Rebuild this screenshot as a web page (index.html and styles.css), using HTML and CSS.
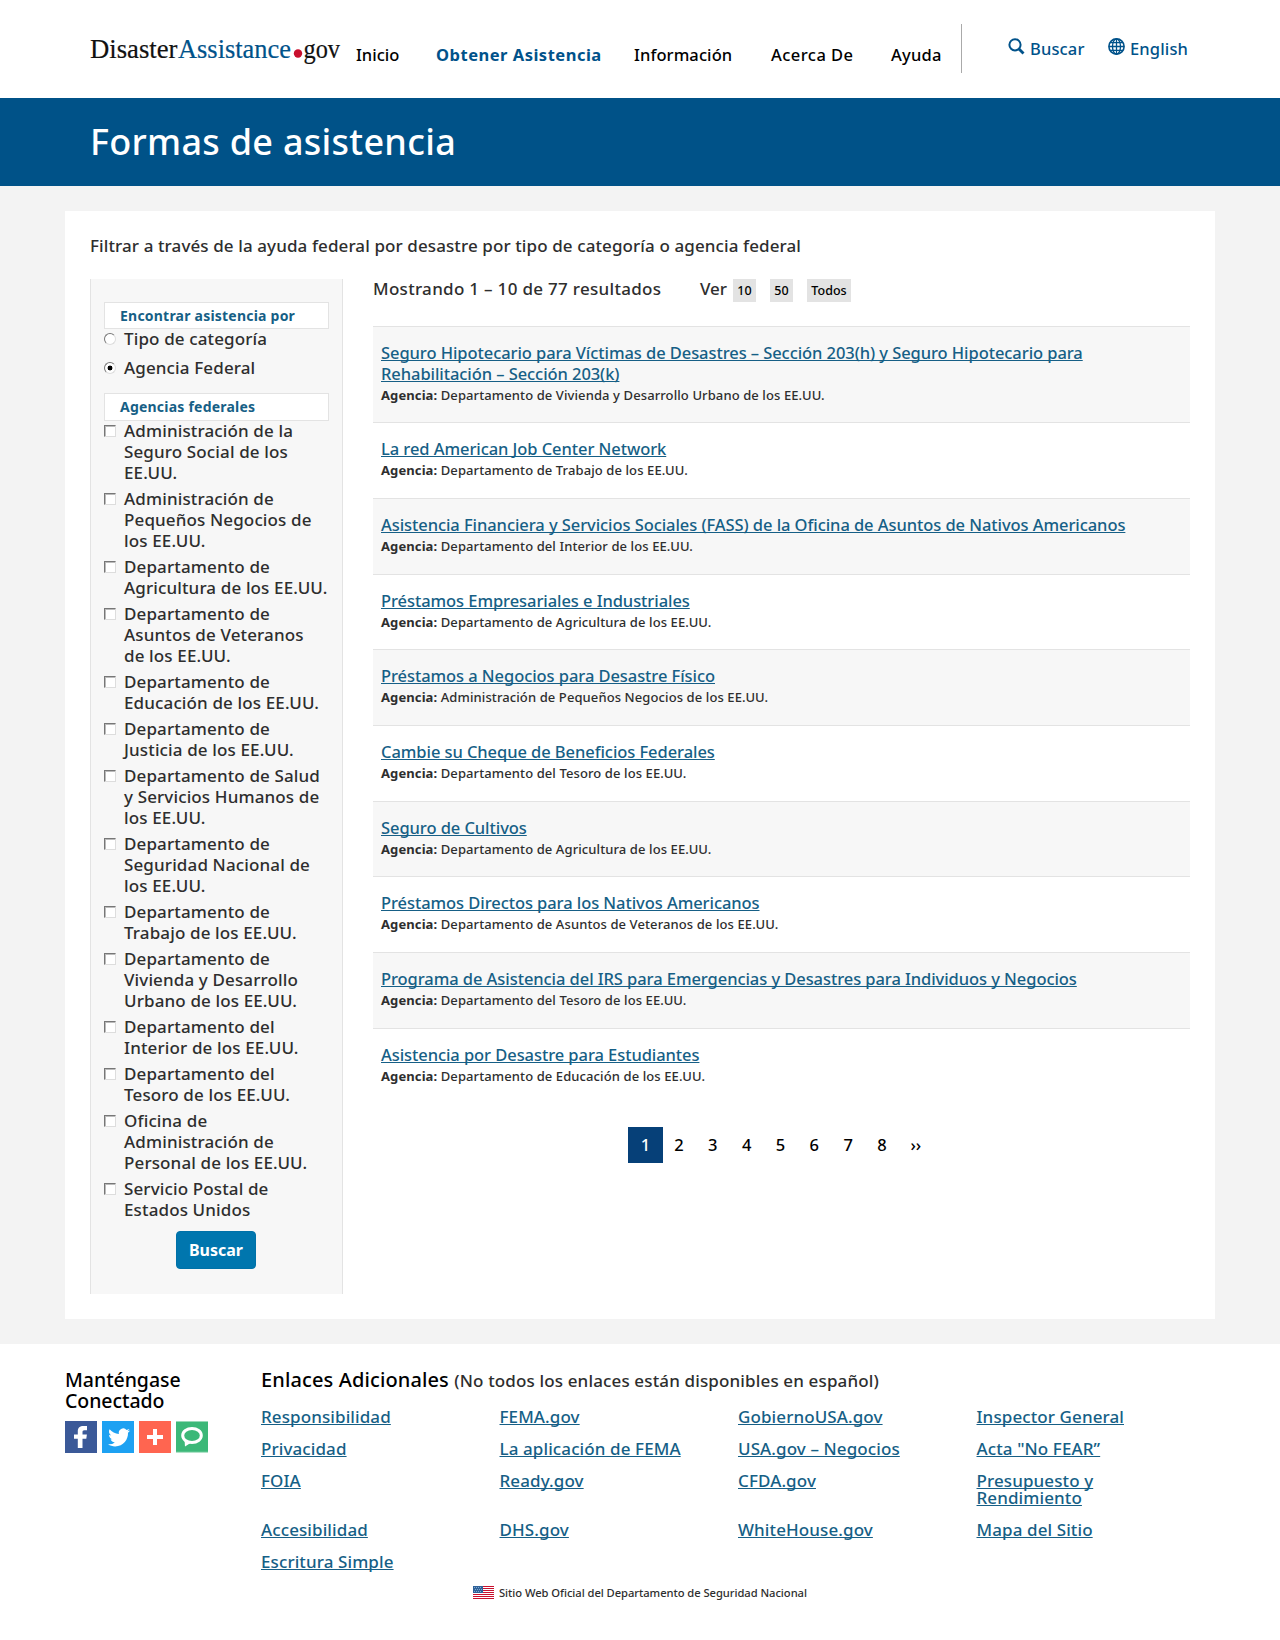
FILE: index.html
```html
<!DOCTYPE html>
<html lang="es">
<head>
<meta charset="utf-8">
<title>Formas de asistencia</title>
<link rel="stylesheet" href="styles.css">
</head>
<body>
<header class="site-header">
  <a class="logo">
    <svg width="260" height="40" viewBox="0 0 260 40" font-family="Liberation Serif, serif" font-size="28">
      <g stroke-width=".200">
      <text x="0" y="24" fill="#111" stroke="#111" textLength="87.5" lengthAdjust="spacingAndGlyphs">Disaster</text>
      <text x="88" y="24" fill="#00528a" stroke="#00528a" textLength="113" lengthAdjust="spacingAndGlyphs">Assistance</text>
      <circle cx="208" cy="19.5" r="4.2" fill="#c8102e"/>
      <text x="213.500" y="24" fill="#111" stroke="#111" textLength="36.500" lengthAdjust="spacingAndGlyphs">gov</text>
      </g>
    </svg>
  </a>
  <nav class="main-nav">
    <a>Inicio</a>
    <a class="current">Obtener Asistencia</a>
    <a>Información</a>
    <a>Acerca De</a>
    <a>Ayuda</a>
  </nav>
  <div class="tools">
    <a class="tool-search"><svg width="17" height="17" viewBox="0 0 17 17" fill="none" stroke="#00528a"><circle cx="7" cy="6.800" r="5.600" stroke-width="2"/><path d="M11 11l4.500 4.500" stroke-width="2.800"/></svg><span>Buscar</span></a>
    <a class="tool-lang"><svg width="17" height="17" viewBox="0 0 17 17" fill="none" stroke="#00528a" stroke-width="1.300"><circle cx="8.500" cy="8.500" r="7.600" stroke-width="1.600"/><ellipse cx="8.500" cy="8.500" rx="4" ry="7.600"/><path d="M8.500 1v15M1 8.500h15M2.200 4.700h12.600M2.200 12.300h12.600"/></svg><span>English</span></a>
  </div>
</header>
<div class="banner"><h1><span>Formas de asistencia</span></h1></div>
<div class="page">
  <main class="card">
    <p class="intro"><span>Filtrar a través de la ayuda federal por desastre por tipo de categoría o agencia federal</span></p>
    <div class="columns">
      <form class="filters">
        <h2 class="box"><span>Encontrar asistencia por</span></h2>
        <label class="opt radio-opt"><i class="radio"></i><span>Tipo de categoría</span></label>
        <label class="opt radio-opt"><i class="radio on"></i><span>Agencia Federal</span></label>
        <h2 class="box second"><span>Agencias federales</span></h2>
        <label class="opt"><i class="check"></i><span>Administración de la<br>Seguro Social de los<br>EE.UU.</span></label>
        <label class="opt"><i class="check"></i><span>Administración de<br>Pequeños Negocios de<br>los EE.UU.</span></label>
        <label class="opt"><i class="check"></i><span>Departamento de<br>Agricultura de los EE.UU.</span></label>
        <label class="opt"><i class="check"></i><span>Departamento de<br>Asuntos de Veteranos<br>de los EE.UU.</span></label>
        <label class="opt"><i class="check"></i><span>Departamento de<br>Educación de los EE.UU.</span></label>
        <label class="opt"><i class="check"></i><span>Departamento de<br>Justicia de los EE.UU.</span></label>
        <label class="opt"><i class="check"></i><span>Departamento de Salud<br>y Servicios Humanos de<br>los EE.UU.</span></label>
        <label class="opt"><i class="check"></i><span>Departamento de<br>Seguridad Nacional de<br>los EE.UU.</span></label>
        <label class="opt"><i class="check"></i><span>Departamento de<br>Trabajo de los EE.UU.</span></label>
        <label class="opt"><i class="check"></i><span>Departamento de<br>Vivienda y Desarrollo<br>Urbano de los EE.UU.</span></label>
        <label class="opt"><i class="check"></i><span>Departamento del<br>Interior de los EE.UU.</span></label>
        <label class="opt"><i class="check"></i><span>Departamento del<br>Tesoro de los EE.UU.</span></label>
        <label class="opt"><i class="check"></i><span>Oficina de<br>Administración de<br>Personal de los EE.UU.</span></label>
        <label class="opt"><i class="check"></i><span>Servicio Postal de<br>Estados Unidos</span></label>
        <button type="button" class="submit"><span>Buscar</span></button>
      </form>
      <section class="results">
        <div class="summary">
          <span class="count">Mostrando 1 – 10 de 77 resultados</span>
          <span class="ver">Ver</span>
          <a class="size"><span>10</span></a><a class="size"><span>50</span></a><a class="size all"><span>Todos</span></a>
        </div>
        <ul class="list">
          <li><a>Seguro Hipotecario para Víctimas de Desastres – Sección 203(h) y Seguro Hipotecario para<br>Rehabilitación – Sección 203(k)</a><p><b>Agencia:</b> <span>Departamento de Vivienda y Desarrollo Urbano de los EE.UU.</span></p></li>
          <li><a>La red American Job Center Network</a><p><b>Agencia:</b> <span>Departamento de Trabajo de los EE.UU.</span></p></li>
          <li><a>Asistencia Financiera y Servicios Sociales (FASS) de la Oficina de Asuntos de Nativos Americanos</a><p><b>Agencia:</b> <span>Departamento del Interior de los EE.UU.</span></p></li>
          <li><a>Préstamos Empresariales e Industriales</a><p><b>Agencia:</b> <span>Departamento de Agricultura de los EE.UU.</span></p></li>
          <li><a>Préstamos a Negocios para Desastre Físico</a><p><b>Agencia:</b> <span>Administración de Pequeños Negocios de los EE.UU.</span></p></li>
          <li><a>Cambie su Cheque de Beneficios Federales</a><p><b>Agencia:</b> <span>Departamento del Tesoro de los EE.UU.</span></p></li>
          <li><a>Seguro de Cultivos</a><p><b>Agencia:</b> <span>Departamento de Agricultura de los EE.UU.</span></p></li>
          <li><a>Préstamos Directos para los Nativos Americanos</a><p><b>Agencia:</b> <span>Departamento de Asuntos de Veteranos de los EE.UU.</span></p></li>
          <li><a>Programa de Asistencia del IRS para Emergencias y Desastres para Individuos y Negocios</a><p><b>Agencia:</b> <span>Departamento del Tesoro de los EE.UU.</span></p></li>
          <li><a>Asistencia por Desastre para Estudiantes</a><p><b>Agencia:</b> <span>Departamento de Educación de los EE.UU.</span></p></li>
        </ul>
        <nav class="pager"><a class="active">1</a><a>2</a><a>3</a><a>4</a><a>5</a><a>6</a><a>7</a><a>8</a><a class="next">››</a></nav>
      </section>
    </div>
  </main>
</div>
<footer class="footer">
  <div class="footer-main">
    <section class="connect">
      <h2><span>Manténgase</span><br><span>Conectado</span></h2>
      <div class="social">
        <svg width="32" height="32" viewBox="0 0 32 32"><path fill="#3b5998" d="M0 0h32v32H0z"/><path fill="#fff" d="M22 5v4.200h-2.600c-1.500 0-1.900.8-1.900 1.900v2.400h4.400l-.6 4.300h-3.800V27h-4.700v-9.200H9v-4.300h3.800v-3.200C12.800 6.800 15 5 18.300 5z"/></svg>
        <svg width="32" height="32" viewBox="0 0 32 32"><path fill="#1da1f2" d="M0 0h32v32H0z"/><path fill="#fff" d="M28 9.500c-.9.400-1.700.6-2.600.7.900-.5 1.600-1.300 2-2.300-.9.500-1.800.8-2.800 1a4.500 4.500 0 0 0-7.700 4.100C13.200 12.800 9.800 11 7.600 8.300c-1.200 2-.6 4.700 1.400 6-.7 0-1.400-.2-2-.6 0 2.200 1.500 4.100 3.600 4.500-.7.200-1.400.2-2 .1.600 1.800 2.200 3.100 4.200 3.100A9 9 0 0 1 6.100 23.300c2 1.300 4.400 2.100 7 2.100 8.400 0 13.200-7.100 12.900-13.600.8-.6 1.500-1.400 2-2.300z"/></svg>
        <svg width="32" height="32" viewBox="0 0 32 32"><path fill="#ff6550" d="M0 0h32v32H0z"/><path fill="#fff" d="M14 8h4v6h6v4h-6v6h-4v-6H8v-4h6z"/></svg>
        <svg width="32" height="32" viewBox="0 0 32 32"><path fill="#b0e2c8" d="M0 0h32v32H0z"/><path fill="#3cb878" d="M0 .800h32v30H0z"/><ellipse cx="16" cy="14.500" rx="9.300" ry="7" fill="none" stroke="#fff" stroke-width="3"/><path fill="#fff" d="M8.500 18.500l.5 7 5.500-3.500z"/></svg>
      </div>
    </section>
    <section class="extra">
      <h2><span>Enlaces Adicionales</span> <small>(No todos los enlaces están disponibles en español)</small></h2>
      <div class="links">
        <a>Responsibilidad</a><a>FEMA.gov</a><a>GobiernoUSA.gov</a><a>Inspector General</a>
        <a>Privacidad</a><a>La aplicación de FEMA</a><a>USA.gov – Negocios</a><a>Acta "No FEAR”</a>
        <a>FOIA</a><a>Ready.gov</a><a>CFDA.gov</a><a>Presupuesto y<br>Rendimiento</a>
        <a>Accesibilidad</a><a>DHS.gov</a><a>WhiteHouse.gov</a><a>Mapa del Sitio</a>
        <a>Escritura Simple</a>
      </div>
    </section>
  </div>
  <p class="official">
    <svg width="21" height="13" viewBox="0 0 21 13"><path fill="#fff" d="M0 0h21v13H0z"/><path stroke="#c8102e" d="M0 .5h21M0 2.500h21M0 4.500h21M0 6.500h21M0 8.500h21M0 10.500h21M0 12.500h21"/><path fill="#2f6299" d="M0 0h10v7H0z"/><path stroke="#7fa8cf" stroke-dasharray="1 1" d="M1 1.500h8M2 3.500h7M1 5.500h8"/></svg>
    <span>Sitio Web Oficial del Departamento de Seguridad Nacional</span>
  </p>
</footer>
</body>
</html>
```
FILE: styles.css
```css
* { box-sizing: border-box; }
body { margin: 0; background: #fff; color: #2e2e2e; font: 500 16.500px/21px "Noto Sans", "Open Sans", sans-serif; }
h1, h2, p, ul { margin: 0; padding: 0; font-weight: 500; }
svg { display: block; flex: none; }

.site-header { height: 98px; padding-left: 90px; display: flex; align-items: flex-start; }
.logo { padding-top: 34px; width: 266px; flex: none; }
.main-nav { display: flex; padding-top: 44px; height: 98px; color: #000; flex: none; width: 605px; font-size: 16.500px; }
.main-nav a { white-space: nowrap; flex: none; }
.main-nav a:nth-child(1) { width: 80px; }
.main-nav a:nth-child(2) { width: 198px; }
.main-nav a:nth-child(3) { width: 137px; letter-spacing: .1px; }
.main-nav a:nth-child(4) { width: 120px; letter-spacing: .45px; }
.main-nav a:nth-child(5) { letter-spacing: .25px; }
.main-nav .current { color: #00528a; font-weight: 700; letter-spacing: .5px; }
.tools { display: flex; border-left: 1px solid #aaa; height: 49px; margin-top: 24px; padding: 14px 0 0 46px; color: #00528a; }
.tools a { display: flex; gap: 5px; width: 100px; letter-spacing: .15px; }

.banner { height: 88px; background: #005288; color: #fff; padding: 16px 90px 0; }
h1 { font-size: 36px; line-height: 56px; letter-spacing: .28px; }

.page { background: #f3f3f3; padding: 25px 65px; height: 1158px; }
.card { background: #fff; height: 1108px; padding: 24px 25px 0; }
.intro { height: 44px; font-size: 17px; letter-spacing: .1px; }
.columns { display: flex; gap: 30px; }
.filters { width: 253px; height: 1015px; background: #f7f7f7; border: solid #e3e3e3; border-width: 0 1px; padding: 23px 13px 0; }
.box { height: 27px; background: #fff; border: 1px solid #e3e3e3; padding-left: 15px; font-size: 14px; line-height: 26px; font-weight: 700; color: #165f86; letter-spacing: .22px; }
.box.second { height: 28px; margin: 15px 0 -1px; }
.opt { display: flex; gap: 8px; margin-bottom: 5px; white-space: nowrap; font-size: 17px; letter-spacing: .13px; }
.radio-opt { margin: -1px 0 9px; }
.check, .radio { width: 12px; height: 12px; flex: none; background: #fff; margin-top: 5px; border: 1px solid; border-color: #777 #ddd #ddd #777; }
.check { box-shadow: inset 1px 1px #bbb; }
.radio { border-radius: 50%; }
.radio.on { background: radial-gradient(circle, #000 2.200px, #fff 2.700px); }
.submit { display: block; width: 80px; height: 38px; margin: 11px auto 0 72px; padding: 0; border: 1px solid #0071a8; border-radius: 4px; background: #0076ae; color: #fff; font: 700 16px/34px "Noto Sans", sans-serif; }

.results { width: 817px; }
.summary { display: flex; height: 47px; }
.count { width: 327px; margin-top: -1px; font-size: 17px; letter-spacing: .3px; }
.ver { width: 33px; margin-top: -1px; font-size: 17px; }
.size { width: 23px; height: 23px; background: #e3e3e3; color: #000; font-size: 12.500px; line-height: 23px; text-align: center; margin-right: 14px; }
.size.all { width: 44px; }
.list { list-style: none; }
.list li { border-top: 1px solid #e3e3e3; padding: 15px 8px 16.700px; white-space: nowrap; }
.list li:first-child { padding-bottom: 16.300px; }
.list li:nth-child(odd) { background: #f7f7f7; }
.list a, .links a { color: #165f86; text-decoration: underline; text-underline-offset: 1px; text-decoration-thickness: 1px; text-decoration-skip-ink: none; }
.list a { letter-spacing: -.07px; }
.list li p { font-size: 13px; padding-top: 1px; letter-spacing: .1px; }
.pager { display: flex; margin: 23.400px 0 0 255px; color: #000; }
.pager a { width: 33.850px; text-align: center; line-height: 35px; }
.pager .active { width: 35px; background: #064078; color: #fff; margin-right: -1px; height: 36px; }

.footer-main { display: flex; padding: 25px 65px 0; height: 242px; }
.connect { width: 197px; }
.connect h2 { font-size: 19.500px; color: #000; letter-spacing: -.05px; }
.extra h2 { font-size: 20px; color: #000; letter-spacing: .12px; }
.social { display: flex; gap: 5px; margin-top: 10px; }
.extra small { font-size: 17px; color: #2e2e2e; letter-spacing: .14px; }
.links { display: grid; grid-template-columns: repeat(4, 238.500px); row-gap: 15px; line-height: 17px; margin-top: 17px; white-space: nowrap; font-size: 17px; letter-spacing: .1px; }
.links a { justify-self: start; }
.official { display: flex; gap: 5px; margin-left: 473px; font-size: 11.200px; line-height: 14px; letter-spacing: -.05px; }
```
